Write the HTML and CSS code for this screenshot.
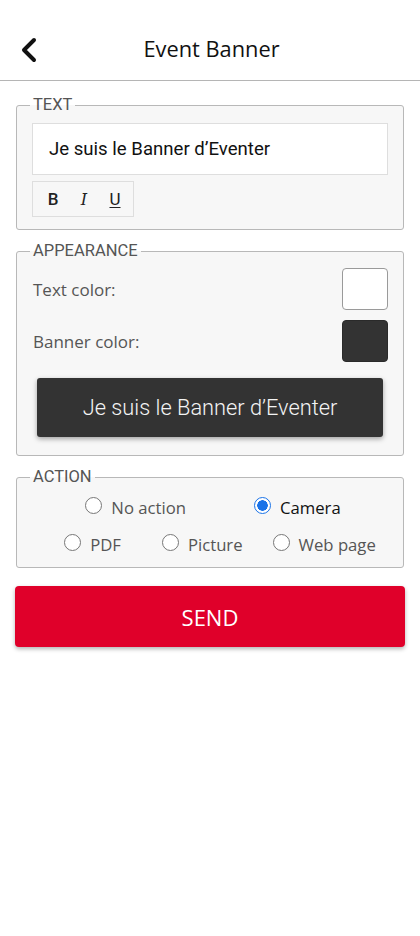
FILE: index.html
```html
<!DOCTYPE html>
<html lang="en">
<head>
<meta charset="utf-8">
<title>Event Banner</title>
<link rel="stylesheet" href="styles.css">
</head>
<body>
<header class="topbar">
  <span class="back" aria-label="Back">
    <svg width="18" height="26" viewBox="0 0 18 26"><path d="M15 3 L5 13 L15 23" fill="none" stroke="#111" stroke-width="4" stroke-linecap="round" stroke-linejoin="round"/></svg>
  </span>
  <h1 class="title">Event Banner</h1>
</header>
<main class="content">
  <fieldset class="group group-text">
    <legend>TEXT</legend>
    <div class="text-input">Je suis le Banner d’Eventer</div>
    <div class="toolbar">
      <span class="tool tool-b">B</span>
      <span class="tool tool-i">I</span>
      <span class="tool tool-u">U</span>
    </div>
  </fieldset>

  <fieldset class="group group-appearance">
    <legend>APPEARANCE</legend>
    <div class="color-row">
      <span class="label">Text color:</span>
      <span class="swatch swatch-white"></span>
    </div>
    <div class="color-row">
      <span class="label">Banner color:</span>
      <span class="swatch swatch-dark"></span>
    </div>
    <div class="banner-preview">Je suis le Banner d’Eventer</div>
  </fieldset>

  <fieldset class="group group-action">
    <legend>ACTION</legend>
    <div class="radio-row row-1">
      <label class="radio"><input type="radio" name="action"><span>No action</span></label>
      <label class="radio checked"><input type="radio" name="action" checked><span>Camera</span></label>
    </div>
    <div class="radio-row row-2">
      <label class="radio"><input type="radio" name="action"><span>PDF</span></label>
      <label class="radio r-picture"><input type="radio" name="action"><span>Picture</span></label>
      <label class="radio r-web"><input type="radio" name="action"><span>Web page</span></label>
    </div>
  </fieldset>

  <button class="send">SEND</button>
</main>
</body>
</html>
```

FILE: styles.css
```css
html, body {
  margin: 0;
  padding: 0;
  background: #ffffff;
}
body {
  width: 420px;
  min-height: 936px;
  font-family: "Open Sans", "Noto Sans", sans-serif;
  color: #222;
}
.topbar {
  height: 80px;
  border-bottom: 1px solid #b5b5b5;
  display: flex;
  align-items: center;
  justify-content: center;
  position: relative;
  background: #fff;
}
.back {
  position: absolute;
  left: 19px;
  top: 37px;
  display: flex;
}
.title {
  margin: 0;
  font-size: 21.8px;
  font-weight: 400;
  color: #111;
  padding-top: 17px;
  padding-left: 3px;
}
.content {
  padding: 14px 16px 0 16px;
  display: flex;
  flex-direction: column;
}
.group {
  margin: 0;
  border: 1px solid #b8b8b8;
  border-radius: 3px;
  background: #f7f7f7;
  padding: 0 15px;
  min-width: 0;
}
.group legend {
  font-family: Roboto, "Open Sans", sans-serif;
  font-size: 16.5px;
  line-height: 20px;
  color: #555;
  padding: 0 3px;
  margin-left: -2px;
}
.group-text {
  padding-top: 8px;
  padding-bottom: 12px;
}
.text-input {
  height: 52px;
  box-sizing: border-box;
  background: #fff;
  border: 1px solid #dedede;
  font-family: Roboto, sans-serif;
  font-size: 18.6px;
  color: #111;
  display: flex;
  align-items: center;
  padding-left: 16px;
}
.toolbar {
  margin-top: 6px;
  width: 102px;
  height: 36px;
  box-sizing: border-box;
  border: 1px solid #dedede;
  display: flex;
  align-items: center;
  padding-left: 13px;
  gap: 17px;
}
.tool {
  font-family: Roboto, sans-serif;
  font-size: 17px;
  font-weight: 500;
  color: #222;
  width: 14px;
  text-align: center;
}
.tool-i { font-style: italic; font-family: "DejaVu Serif", serif; font-size: 16px; font-weight: 400; }
.tool-u { text-decoration: underline; text-underline-offset: 2px; font-weight: 400; }

.group-appearance {
  margin-top: 11px;
  padding-top: 7px;
  padding-bottom: 18px;
}
.color-row {
  display: flex;
  align-items: center;
  justify-content: space-between;
  height: 42px;
  margin-bottom: 10px;
}
.label {
  font-size: 17px;
  color: #555;
  padding-left: 1px;
}
.swatch {
  width: 46px;
  height: 42px;
  box-sizing: border-box;
  border-radius: 4px;
}
.swatch-white {
  background: #fff;
  border: 1px solid #9a9a9a;
}
.swatch-dark {
  background: #333;
  border: 1px solid #2a2a2a;
}
.banner-preview {
  margin: 16px 5px 0 5px;
  height: 59px;
  background: #333333;
  border-radius: 3px;
  box-shadow: 0 2px 5px rgba(0,0,0,0.35);
  color: #f4f4f4;
  font-family: Roboto, sans-serif;
  font-size: 21.8px;
  font-weight: 300;
  display: flex;
  align-items: center;
  justify-content: center;
}

.group-action {
  margin-top: 11px;
  padding-top: 5px;
  padding-bottom: 8px;
}
.radio-row {
  display: flex;
  justify-content: center;
  height: 30px;
  align-items: center;
}
.row-1 { gap: 68px; padding-left: 6px; }
.row-2 { margin-top: 7px; padding-left: 20px; }
.r-picture { margin-left: 41px; }
.r-web { margin-left: 30px; }
.radio {
  display: flex;
  align-items: center;
  gap: 9px;
  font-size: 16.7px;
  color: #555;
}
.radio.checked { color: #111; }
.radio input {
  appearance: none;
  -webkit-appearance: none;
  margin: 0;
  width: 17px;
  height: 17px;
  box-sizing: border-box;
  border: 1px solid #777;
  border-radius: 50%;
  background: #fff;
  position: relative;
  top: -2px;
}
.radio input:checked {
  border: 1.5px solid #1a73e8;
  background: radial-gradient(circle, #1a73e8 0 5px, #fff 5.5px);
}

.send {
  margin-top: 18px;
  margin-left: -1px;
  margin-right: -1px;
  height: 61px;
  border: none;
  border-radius: 4px;
  background: #e0002a;
  color: #fff;
  font-family: "Open Sans", sans-serif;
  font-size: 22px;
  box-shadow: 0 2px 4px rgba(0,0,0,0.3);
}
```
